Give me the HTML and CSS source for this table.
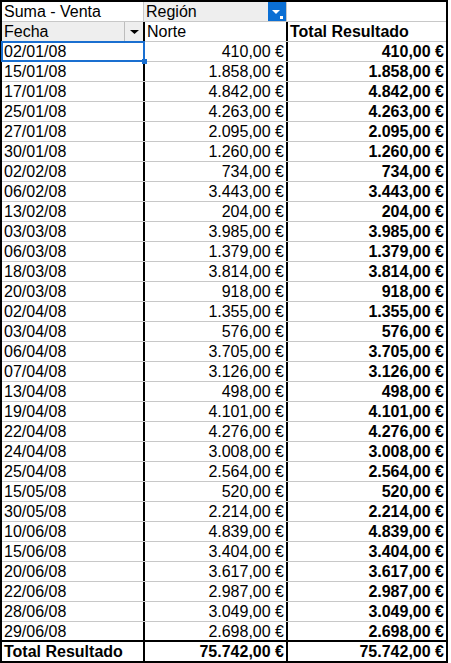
FILE: index.html
```html
<!DOCTYPE html>
<html lang="es">
<head>
<meta charset="utf-8">
<title>Tabla dinámica</title>
<link rel="stylesheet" href="styles.css">
</head>
<body>
<div class="sheet">
  <div class="row head1">
    <div class="cell ca white">Suma - Venta</div>
    <div class="cell cb grey withbtn"><span class="label">Región</span><span class="btn-blue"><svg width="18" height="19" viewBox="0 0 18 19"><path d="M4 8h8l-4 4z" fill="#fff"/><rect x="12" y="14" width="3" height="3" fill="#fff"/></svg></span></div>
    <div class="cell cc white"></div>
  </div>
  <div class="row head2">
    <div class="cell ca grey withbtn"><span class="label">Fecha</span><span class="btn-grey"><svg width="19" height="19" viewBox="0 0 19 19"><path d="M5 8h9l-4.5 4z" fill="#000"/></svg></span></div>
    <div class="cell cb left">Norte</div>
    <div class="cell cc bold left">Total Resultado</div>
  </div>
  <div class="row"><div class="cell ca selected">02/01/08</div><div class="cell cb">410,00 €</div><div class="cell cc bold">410,00 €</div></div>
  <div class="row"><div class="cell ca">15/01/08</div><div class="cell cb">1.858,00 €</div><div class="cell cc bold">1.858,00 €</div></div>
  <div class="row"><div class="cell ca">17/01/08</div><div class="cell cb">4.842,00 €</div><div class="cell cc bold">4.842,00 €</div></div>
  <div class="row"><div class="cell ca">25/01/08</div><div class="cell cb">4.263,00 €</div><div class="cell cc bold">4.263,00 €</div></div>
  <div class="row"><div class="cell ca">27/01/08</div><div class="cell cb">2.095,00 €</div><div class="cell cc bold">2.095,00 €</div></div>
  <div class="row"><div class="cell ca">30/01/08</div><div class="cell cb">1.260,00 €</div><div class="cell cc bold">1.260,00 €</div></div>
  <div class="row"><div class="cell ca">02/02/08</div><div class="cell cb">734,00 €</div><div class="cell cc bold">734,00 €</div></div>
  <div class="row"><div class="cell ca">06/02/08</div><div class="cell cb">3.443,00 €</div><div class="cell cc bold">3.443,00 €</div></div>
  <div class="row"><div class="cell ca">13/02/08</div><div class="cell cb">204,00 €</div><div class="cell cc bold">204,00 €</div></div>
  <div class="row"><div class="cell ca">03/03/08</div><div class="cell cb">3.985,00 €</div><div class="cell cc bold">3.985,00 €</div></div>
  <div class="row"><div class="cell ca">06/03/08</div><div class="cell cb">1.379,00 €</div><div class="cell cc bold">1.379,00 €</div></div>
  <div class="row"><div class="cell ca">18/03/08</div><div class="cell cb">3.814,00 €</div><div class="cell cc bold">3.814,00 €</div></div>
  <div class="row"><div class="cell ca">20/03/08</div><div class="cell cb">918,00 €</div><div class="cell cc bold">918,00 €</div></div>
  <div class="row"><div class="cell ca">02/04/08</div><div class="cell cb">1.355,00 €</div><div class="cell cc bold">1.355,00 €</div></div>
  <div class="row"><div class="cell ca">03/04/08</div><div class="cell cb">576,00 €</div><div class="cell cc bold">576,00 €</div></div>
  <div class="row"><div class="cell ca">06/04/08</div><div class="cell cb">3.705,00 €</div><div class="cell cc bold">3.705,00 €</div></div>
  <div class="row"><div class="cell ca">07/04/08</div><div class="cell cb">3.126,00 €</div><div class="cell cc bold">3.126,00 €</div></div>
  <div class="row"><div class="cell ca">13/04/08</div><div class="cell cb">498,00 €</div><div class="cell cc bold">498,00 €</div></div>
  <div class="row"><div class="cell ca">19/04/08</div><div class="cell cb">4.101,00 €</div><div class="cell cc bold">4.101,00 €</div></div>
  <div class="row"><div class="cell ca">22/04/08</div><div class="cell cb">4.276,00 €</div><div class="cell cc bold">4.276,00 €</div></div>
  <div class="row"><div class="cell ca">24/04/08</div><div class="cell cb">3.008,00 €</div><div class="cell cc bold">3.008,00 €</div></div>
  <div class="row"><div class="cell ca">25/04/08</div><div class="cell cb">2.564,00 €</div><div class="cell cc bold">2.564,00 €</div></div>
  <div class="row"><div class="cell ca">15/05/08</div><div class="cell cb">520,00 €</div><div class="cell cc bold">520,00 €</div></div>
  <div class="row"><div class="cell ca">30/05/08</div><div class="cell cb">2.214,00 €</div><div class="cell cc bold">2.214,00 €</div></div>
  <div class="row"><div class="cell ca">10/06/08</div><div class="cell cb">4.839,00 €</div><div class="cell cc bold">4.839,00 €</div></div>
  <div class="row"><div class="cell ca">15/06/08</div><div class="cell cb">3.404,00 €</div><div class="cell cc bold">3.404,00 €</div></div>
  <div class="row"><div class="cell ca">20/06/08</div><div class="cell cb">3.617,00 €</div><div class="cell cc bold">3.617,00 €</div></div>
  <div class="row"><div class="cell ca">22/06/08</div><div class="cell cb">2.987,00 €</div><div class="cell cc bold">2.987,00 €</div></div>
  <div class="row"><div class="cell ca">28/06/08</div><div class="cell cb">3.049,00 €</div><div class="cell cc bold">3.049,00 €</div></div>
  <div class="row last"><div class="cell ca">29/06/08</div><div class="cell cb">2.698,00 €</div><div class="cell cc bold">2.698,00 €</div></div>
  <div class="row total"><div class="cell ca bold">Total Resultado</div><div class="cell cb bold">75.742,00 €</div><div class="cell cc bold">75.742,00 €</div></div>
</div>
</body>
</html>
```

FILE: styles.css
```css
html, body {
  margin: 0;
  padding: 0;
  background: #fff;
}

.sheet {
  width: 448px;
  box-sizing: border-box;
  border: 2px solid #000;
  font-family: "Liberation Sans", Arial, sans-serif;
  font-size: 16px;
  color: #000;
}

.row {
  display: flex;
  height: 20px;
  box-sizing: border-box;
  border-bottom: 1px solid #c8c8c8;
}

.row.last {
  border-bottom: 2px solid #000;
}

.row.total {
  height: 19px;
  border-bottom: none;
}

.cell {
  box-sizing: border-box;
  height: 100%;
  padding: 0 2px;
  line-height: 20px;
  white-space: nowrap;
  overflow: hidden;
  text-align: right;
}

.ca {
  width: 143px;
  border-right: 2px solid #000;
  text-align: left;
}

.cb {
  width: 143px;
  border-right: 2px solid #000;
}

.cc {
  flex: 1;
}

.left {
  text-align: left;
}

.bold {
  font-weight: bold;
}

.grey {
  background: #eeeeee;
}

.white {
  background: #fff;
}

.head1 .ca,
.head1 .cb {
  border-right: 1px solid #c8c8c8;
}

.head1 .ca {
  width: 142px;
}

.head1 .cb {
  width: 143px;
}

.withbtn {
  display: flex;
  align-items: stretch;
  padding-right: 0;
}

.withbtn .label {
  flex: 1;
  text-align: left;
}

.btn-blue {
  width: 18px;
  height: 19px;
  background: #0b6fd4;
  display: block;
}

.btn-blue svg,
.btn-grey svg {
  display: block;
}

.btn-grey {
  width: 19px;
  height: 19px;
  box-sizing: border-box;
  border-left: 1px solid #bdbdbd;
  background: #eeeeee;
  display: block;
}

.selected {
  position: relative;
  overflow: visible;
}

.selected::before {
  content: "";
  position: absolute;
  left: -1px;
  top: -1px;
  right: -2px;
  bottom: -1px;
  border: 2px solid #1a6fd0;
  pointer-events: none;
}

.selected::after {
  content: "";
  position: absolute;
  right: -4px;
  bottom: -3px;
  width: 5px;
  height: 5px;
  background: #1a6fd0;
}
```
